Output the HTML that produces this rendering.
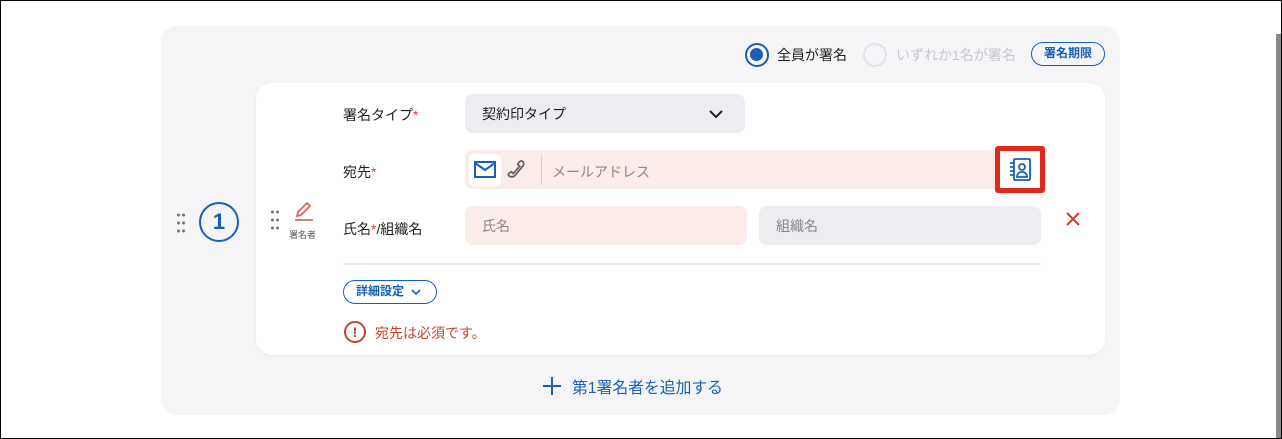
<!DOCTYPE html>
<html><head><meta charset="utf-8"><style>
*{box-sizing:border-box;margin:0;padding:0}
body{width:1282px;height:439px;background:#fff;font-family:"Liberation Sans","Noto Sans CJK JP",sans-serif;position:relative;overflow:hidden;color:#222}
.a{position:absolute}
.panel{left:161px;top:26px;width:959px;height:389px;background:#f5f5f7;border-radius:16px}
.card{left:256px;top:83px;width:849px;height:272px;background:#fff;border-radius:16px;box-shadow:0 1px 3px rgba(0,0,0,.05)}
.lbl{font-size:14px;color:#222}
.req{color:#d04a3a}
.in{border-radius:8px;font-size:14px;color:#888;padding-left:17px;display:flex;align-items:center}
.dots{width:10px;height:22px;background:radial-gradient(circle,#777 1.4px,transparent 1.6px) 0 0/5px 8px}
</style></head><body>
<div class="a" style="left:0;top:0;width:1282px;height:439px;border:1px solid #000;z-index:5"></div>
<div class="a" style="right:1px;top:34px;width:5px;height:405px;background:#8a8a8a"></div>
<div class="a panel"></div>
<div class="a" style="left:745px;top:43px;width:24px;height:24px;border:2.5px solid #1a5fb4;border-radius:50%"><div style="margin:3px;width:13px;height:13px;border-radius:50%;background:#1a5fb4"></div></div>
<div class="a lbl" style="left:777px;top:45px">全員が署名</div>
<div class="a" style="left:863px;top:43px;width:24px;height:24px;border:2px solid #e2e2e6;border-radius:50%"></div>
<div class="a" style="left:896px;top:45px;font-size:14px;color:#c8c8cc">いずれか1名が署名</div>
<div class="a" style="left:1031px;top:42px;width:74px;height:24px;border:1.5px solid #1a5fb4;border-radius:12px;font-size:12px;font-weight:bold;color:#1a5fb4;text-align:center;line-height:21px">署名期限</div>
<div class="a dots" style="left:176px;top:211px"></div>
<div class="a" style="left:199px;top:202px;width:40px;height:40px;border:2px solid #1a5fb4;border-radius:50%;color:#1a5fb4;font-weight:bold;font-size:22px;text-align:center;line-height:36px">1</div>
<div class="a card"></div>
<div class="a dots" style="left:270px;top:208px"></div>
<svg class="a" style="left:292px;top:199px" width="24" height="24" viewBox="0 0 24 24" fill="none" stroke="#d9695a" stroke-width="1.8"><path d="M5 17l1-4L15 4l3 3-9 9z"/><path d="M3 21h18"/></svg>
<div class="a" style="left:289px;top:228px;font-size:9px;color:#555">署名者</div>
<div class="a lbl" style="left:343px;top:105px">署名タイプ<span class="req">*</span></div>
<div class="a in" style="left:465px;top:94px;width:280px;height:39px;background:#ededf1;color:#222">契約印タイプ</div>
<svg class="a" style="left:706px;top:104px" width="20" height="20" viewBox="0 0 20 20" fill="none" stroke="#222" stroke-width="2"><path d="M4 7l6 6 6-6"/></svg>
<div class="a lbl" style="left:343px;top:162px">宛先<span class="req">*</span></div>
<div class="a" style="left:465px;top:150px;width:580px;height:39px;background:#fbece9;border-radius:8px"></div>
<div class="a" style="left:469px;top:154px;width:32px;height:32px;background:#fff;border-radius:5px"></div>
<svg class="a" style="left:474px;top:160px" width="22" height="20" viewBox="0 0 22 20" fill="none" stroke="#1a5fb4" stroke-width="2"><rect x="1" y="2" width="20" height="15"/><path d="M1 3l10 7 10-7"/></svg>
<svg class="a" style="left:505px;top:158px" width="22" height="22" viewBox="0 0 24 24" fill="none" stroke="#666" stroke-width="2"><path d="M18 3c2 1 3 3 2 5l-9 11c-2 2-4 2-6 1l-1-1c-1-1 0-2 1-3l2-1 2 2 7-8-2-2 1-2c1-1 2-2 3-2z"/></svg>
<div class="a" style="left:541px;top:155px;width:1px;height:30px;background:#d8d0ce"></div>
<div class="a" style="left:552px;top:162px;font-size:14px;color:#888">メールアドレス</div>
<div class="a" style="left:995px;top:146px;width:50px;height:47px;border:5px solid #e0291b;background:#fff;border-radius:3px"></div>
<svg class="a" style="left:1008px;top:157px" width="24" height="26" viewBox="0 0 24 26" fill="none" stroke="#1a5fb4" stroke-width="1.8"><rect x="6" y="2" width="16" height="21" rx="1"/><path d="M2 6h4M2 10h4M2 14h4M2 18h4"/><circle cx="14" cy="10" r="3"/><path d="M9 20c0-3 2-5 5-5s5 2 5 5z"/></svg>
<div class="a lbl" style="left:343px;top:219px">氏名<span class="req">*</span>/組織名</div>
<div class="a in" style="left:465px;top:206px;width:282px;height:39px;background:#fbece9">氏名</div>
<div class="a in" style="left:759px;top:206px;width:282px;height:39px;background:#ededf1">組織名</div>
<svg class="a" style="left:1065px;top:211px" width="16" height="16" viewBox="0 0 16 16" stroke="#c9412f" stroke-width="2"><path d="M2 2l12 12M14 2L2 14"/></svg>
<div class="a" style="left:343px;top:263px;width:698px;height:2px;background:#ececef"></div>
<div class="a" style="left:343px;top:280px;width:94px;height:24px;border:1.5px solid #1a5fb4;border-radius:12px;font-size:12px;font-weight:bold;color:#1a5fb4;line-height:21px;padding-left:12px">詳細設定<svg style="position:absolute;left:66px;top:6px" width="12" height="10" viewBox="0 0 12 10" fill="none" stroke="#1a5fb4" stroke-width="1.6"><path d="M2 3l4 4 4-4"/></svg></div>
<div class="a" style="left:344px;top:321px;width:22px;height:22px;border:2px solid #c9412f;border-radius:50%;color:#c9412f;font-weight:bold;font-size:14px;text-align:center;line-height:18px">!</div>
<div class="a" style="left:375px;top:323px;font-size:14px;color:#c9412f">宛先は必須です。</div>
<svg class="a" style="left:542px;top:376px" width="20" height="20" viewBox="0 0 20 20" stroke="#1a5fb4" stroke-width="2"><path d="M10 1v18M1 10h18"/></svg>
<div class="a" style="left:572px;top:375px;font-size:15.8px;color:#1a5fb4">第1署名者を追加する</div>
</body></html>
